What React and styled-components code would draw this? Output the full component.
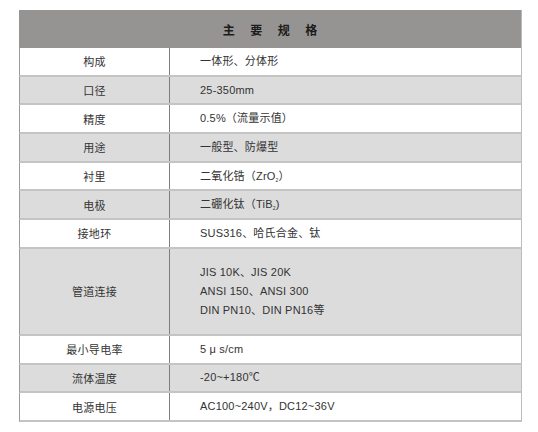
import React from "react";
import styled, { createGlobalStyle } from "styled-components";

const Global = createGlobalStyle`
  html, body { margin: 0; padding: 0; background: #fff; }
  body { font-family: "Liberation Sans", "Noto Sans CJK SC", sans-serif; }
`;

const Page = styled.div`
  padding: 10px 16px 0 19px;
  width: 538px;
  box-sizing: border-box;
`;

const Table = styled.div`
  display: flex;
  flex-direction: column;
  width: 503px;
`;

const Header = styled.div`
  height: 38px;
  background: #959492;
  display: flex;
  align-items: center;
  justify-content: center;
  font-family: "Noto Sans CJK SC", sans-serif;
  font-weight: 700;
  font-size: 12px;
  color: #1c1c1c;
  letter-spacing: 15.5px;
  padding-left: 15.5px;
  box-sizing: border-box;
  border-right: 1px solid #b8b8b8;
`;

const Row = styled.div`
  display: grid;
  grid-template-columns: 150px 1fr;
  height: ${(p) => p.$h}px;
  background: ${(p) => (p.$gray ? "#dcdcdc" : "#ffffff")};
  border-left: 1px solid #9a9a9a;
  border-right: 1px solid #bcbcbc;
  border-bottom: 2px solid #c4c4c4;
  box-sizing: border-box;
`;

const Label = styled.div`
  display: flex;
  align-items: center;
  justify-content: center;
  border-right: 1px solid #7e7e7e;
  font-family: "Noto Sans CJK SC", sans-serif;
  font-size: 11px;
  color: #333;
  letter-spacing: 0.3px;
`;

const Value = styled.div`
  display: flex;
  flex-direction: column;
  justify-content: center;
  padding-left: 30px;
  font-size: 11px;
  color: #333;
  gap: 8px;
  line-height: 11px;
`;

const Line = styled.div`
  white-space: nowrap;
  letter-spacing: 0.2px;
`;

const Sub = styled.sub`
  font-size: 5px;
  vertical-align: -2px;
  line-height: 0;
`;

const rows = [
  { label: "构成", lines: ["一体形、分体形"] },
  { label: "口径", lines: ["25-350mm"] },
  { label: "精度", lines: ["0.5%（流量示值）"] },
  { label: "用途", lines: ["一般型、防爆型"] },
  { label: "衬里", lines: [<>二氧化锆（ZrO<Sub>2</Sub>）</>] },
  { label: "电极", lines: [<>二硼化钛（TiB<Sub>2</Sub>)</>] },
  { label: "接地环", lines: ["SUS316、哈氏合金、钛"] },
  {
    label: "管道连接",
    lines: ["JIS 10K、JIS 20K", "ANSI 150、ANSI 300", "DIN PN10、DIN PN16等"],
    h: 87,
  },
  { label: "最小导电率", lines: ["5 μ s/cm"] },
  { label: "流体温度", lines: ["-20~+180℃"] },
  { label: "电源电压", lines: ["AC100~240V，DC12~36V"] },
];

export default function App() {
  return (
    <>
      <Global />
      <Page>
        <Table>
          <Header>主要规格</Header>
          {rows.map((r, i) => (
            <Row key={i} $gray={i % 2 === 1} $h={r.h || 28.7}>
              <Label>{r.label}</Label>
              <Value>
                {r.lines.map((l, j) => (
                  <Line key={j}>{l}</Line>
                ))}
              </Value>
            </Row>
          ))}
        </Table>
      </Page>
    </>
  );
}
